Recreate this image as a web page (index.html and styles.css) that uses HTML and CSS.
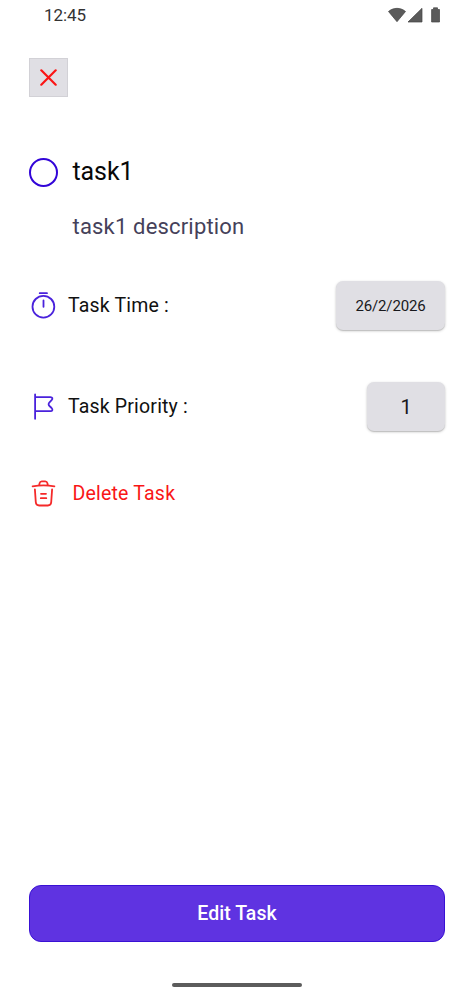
FILE: index.html
```html
<!DOCTYPE html>
<html lang="en">
<head>
<meta charset="utf-8">
<title>Task</title>
<link rel="stylesheet" href="styles.css">
</head>
<body>
<div class="screen">
  <header class="status">
    <span class="clock">12:45</span>
    <svg class="status-icons" width="54" height="16" viewBox="0 0 54 16" fill="#5b5b5b" stroke="#444" stroke-width=".7">
      <path d="M.5 4.500C5.500.3 12.500.3 17.500 4.500L9 14.700Z"/>
      <path d="M20 15 34 1.300V15Z"/>
      <path d="M43.600 2.500H45.500V.8H49.500V2.500H51.500V15H43.600Z"/>
    </svg>
  </header>
  <main class="content">
    <button class="close" aria-label="Close">
      <svg width="18" height="18" viewBox="0 0 18 18" fill="none" stroke="#fb1515" stroke-width="2.200" stroke-linecap="round"><path d="M1.300 1.300 15.700 15.700M15.700 1.300 1.300 15.700"/></svg>
    </button>
    <div class="row title-row">
      <span class="circle"></span>
      <h1 class="title">task1</h1>
    </div>
    <p class="description">task1 description</p>
    <div class="row field">
      <svg class="icon" width="29" height="29" viewBox="0 0 29 29" fill="none" stroke="#4a22dc" stroke-width="1.800" stroke-linecap="round"><circle cx="14.400" cy="15.700" r="10.900"/><path d="M10.700 2.200H18M14.500 9.500V15.800"/></svg>
      <span class="label time-label">Task Time :</span>
      <button class="chip date">26/2/2026</button>
    </div>
    <div class="row field priority">
      <svg class="icon" width="29" height="29" viewBox="0 0 29 29" fill="none" stroke="#4a22dc" stroke-width="1.800" stroke-linecap="round" stroke-linejoin="round"><path d="M6.100 2.500V26.800M6.100 5.100H21.500C23.500 5.100 24 6.800 22.600 8.200L20.500 10.300C19.300 11.500 19.300 12.800 20.500 14L22.600 16C24 17.500 23.500 19.200 21.500 19.200H6.100"/></svg>
      <span class="label priority-label">Task Priority :</span>
      <button class="chip level">1</button>
    </div>
    <div class="row delete">
      <svg class="icon" width="29" height="29" viewBox="0 0 29 29" fill="none" stroke="#f52a2a" stroke-width="1.800" stroke-linecap="round" stroke-linejoin="round"><path d="M3.600 7.300Q14.500 5.300 25.400 7.300M10.200 6.200 10.600 4.100Q11 2.300 12.800 2.300H16.200Q18 2.300 18.400 4.100L18.800 6.200M5.900 10.400 6.800 23.300Q7 26.500 10.200 26.500H18.800Q22 26.500 22.200 23.300L23.100 10.400M12 14.800H17M11.800 19.200H17.300"/></svg>
      <span class="delete-label">Delete Task</span>
    </div>
    <button class="edit"><span>Edit Task</span></button>
  </main>
  <div class="home-bar"></div>
</div>
</body>
</html>
```
FILE: styles.css
```css
* { box-sizing: border-box; margin: 0; }
body { background: #fff; font-family: Roboto, sans-serif; color: #111; }
button { font: inherit; padding: 0; border: 0; }
svg { display: block; flex: none; }
.screen { width: 474px; height: 1000px; display: flex; flex-direction: column; overflow: hidden; }
.status { height: 30px; padding: 0 32px 0 44px; display: flex; align-items: center; justify-content: space-between; }
.clock { font-size: 17px; line-height: 30px; color: #333; letter-spacing: -.1px; }
.content { flex: 1; padding: 28px 29px 0; display: flex; flex-direction: column; }
.close { width: 39px; height: 39px; background: #e0dfe4; border: 1px solid #d2d1d6; display: flex; align-items: center; justify-content: center; }
.row { display: flex; align-items: center; }
.title-row { height: 40px; margin-top: 55px; gap: 14.500px; }
.circle { width: 29px; height: 29px; border: 2px solid #3205d8; border-radius: 50%; }
.title { font-size: 25px; line-height: 40px; font-weight: 400; color: #080808; letter-spacing: -.1px; }
.description { margin: 20px 0 0 43.500px; font-size: 22px; line-height: 30px; letter-spacing: .18px; color: #45415a; }
.field { height: 49px; margin-top: 39px; gap: 10px; }
.priority { margin-top: 52px; }
.label { font-size: 19.500px; line-height: 30px; letter-spacing: .18px; padding-top: 1px; }
.chip { height: 49px; margin-left: auto; border-radius: 7px; background: #e0dfe4; color: #18181c; box-shadow: 0 1px 3px #0003, 0 1px 1px #0002; }
.date { width: 109px; font-size: 15px; letter-spacing: -.15px; }
.level { width: 78px; font-size: 20px; }
.delete { margin-top: 46px; height: 32px; gap: 14.500px; }
.delete-label { font-size: 19.500px; line-height: 30px; color: #f91616; letter-spacing: .2px; padding-top: 2px; }
.edit { height: 57px; margin-top: auto; margin-bottom: 41.500px; border: 1px solid #3911d4; border-radius: 12px; background: #5f33e1; color: #fff; font-size: 19.500px; font-weight: 500; letter-spacing: .05px; }
.home-bar { align-self: center; width: 130px; height: 4px; margin-bottom: 13px; border-radius: 2px; background: #5c5c5c; }
```
